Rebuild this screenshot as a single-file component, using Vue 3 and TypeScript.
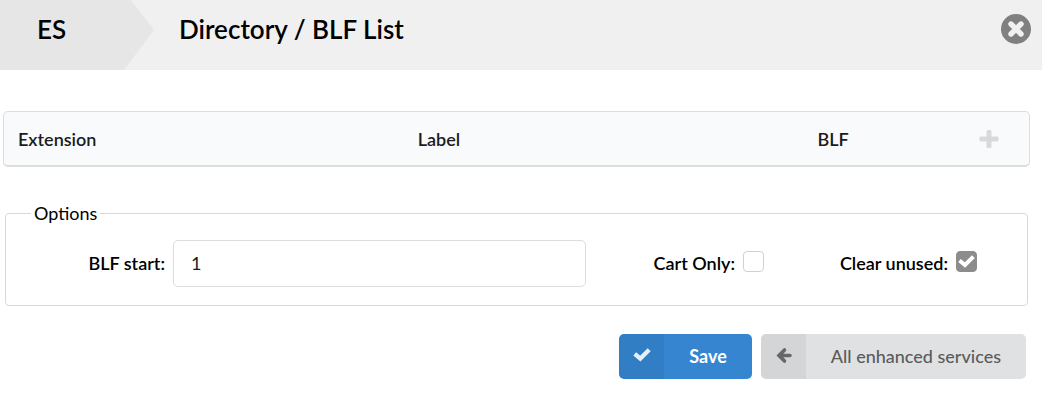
<script setup lang="ts">
import { ref } from 'vue'

interface BlfEntry {
  extension: string
  label: string
  blf: number
}

const entries = ref<BlfEntry[]>([])
const blfStart = ref('1')
const cartOnly = ref(false)
const clearUnused = ref(true)

function addEntry(): void {
  entries.value.push({
    extension: '',
    label: '',
    blf: Number(blfStart.value) + entries.value.length,
  })
}
</script>

<template>
  <header class="bar">
    <a class="crumb" href="#">ES</a>
    <h1 class="title">Directory / BLF List</h1>
    <button class="close" type="button" aria-label="Close">
      <svg viewBox="0 0 30 30" width="30" height="30" aria-hidden="true">
        <circle cx="15" cy="15" r="15" fill="#808080" />
        <path d="M10 10 20 20M20 10 10 20" stroke="#f0f0f0" stroke-width="5.4" stroke-linecap="round" />
      </svg>
    </button>
  </header>

  <main class="content">
    <table class="list">
      <colgroup>
        <col class="wide" />
        <col class="wide" />
        <col />
        <col class="action" />
      </colgroup>
      <thead>
        <tr>
          <th scope="col">Extension</th>
          <th scope="col">Label</th>
          <th scope="col">BLF</th>
          <td>
            <button class="add" type="button" aria-label="Add entry" @click="addEntry">
              <svg viewBox="0 0 20 20" width="20" height="20" aria-hidden="true">
                <path d="M9 1h2q1.500 0 1.500 1.500V7.500H18Q19.500 7.500 19.500 9v2q0 1.500-1.500 1.500H12.500V17.500Q12.500 19 11 19H9Q7.500 19 7.500 17.500V12.500H2Q.5 12.500 .5 11V9Q.5 7.500 2 7.500H7.500V2.500Q7.500 1 9 1Z" fill="#d9d9d9" />
              </svg>
            </button>
          </td>
        </tr>
      </thead>
      <tbody>
        <tr v-for="(entry, index) in entries" :key="index">
          <td>{{ entry.extension }}</td>
          <td>{{ entry.label }}</td>
          <td>{{ entry.blf }}</td>
          <td></td>
        </tr>
      </tbody>
    </table>

    <form @submit.prevent>
      <fieldset class="options">
        <legend>Options</legend>
        <div class="fields">
          <label class="caption" for="blf-start">BLF start:</label>
          <input id="blf-start" v-model="blfStart" class="text" type="text" />
          <div class="check">
            <label for="cart-only">Cart Only:</label>
            <input id="cart-only" v-model="cartOnly" type="checkbox" />
          </div>
          <div class="check">
            <label for="clear-unused">Clear unused:</label>
            <input id="clear-unused" v-model="clearUnused" type="checkbox" />
          </div>
        </div>
      </fieldset>

      <div class="actions">
        <button class="btn primary" type="submit">
          <span class="icon">
            <svg viewBox="0 0 20 20" width="20" height="20" aria-hidden="true">
              <path d="M4.300 9.200 8.300 12.600 15.700 5.200" fill="none" stroke="currentColor" stroke-width="4.200" stroke-linecap="square" stroke-linejoin="miter" />
            </svg>
          </span>
          <span class="text-part">Save</span>
        </button>
        <button class="btn" type="button">
          <span class="icon">
            <svg viewBox="0 0 20 20" width="20" height="20" aria-hidden="true">
              <path d="M10.500 4 5 9.500 10.500 15M6 9.500H16" fill="none" stroke="currentColor" stroke-width="3.600" stroke-linecap="round" stroke-linejoin="miter" />
            </svg>
          </span>
          <span class="text-part">All enhanced services</span>
        </button>
      </div>
    </form>
  </main>
</template>

<style>
body {
  background: #fff;
  font-family: Lato, "Open Sans", sans-serif;
  font-size: 18px;
  line-height: 22px;
  color: #000;
}

button,
input {
  font: inherit;
}
</style>

<style scoped>
.bar {
  display: flex;
  align-items: flex-start;
  height: 70px;
  background: #f0f0f0;
}

.crumb {
  box-sizing: border-box;
  width: 154px;
  height: 70px;
  padding: 14px 37px;
  background: #e6e6e6;
  clip-path: polygon(0 0, 131px 0, 154px 30px, 124px 70px, 0 70px);
  color: #000;
  font-size: 26px;
  font-weight: 600;
  line-height: 30px;
  text-decoration: none;
}

.title {
  flex: 1;
  margin: 0;
  padding: 14px 25px;
  font-size: 26px;
  font-weight: 600;
  line-height: 30px;
}

.close {
  margin: 14px 11px 0 0;
  padding: 0;
  border: 0;
  background: none;
  cursor: pointer;
}

.close svg,
.add svg,
.icon svg {
  display: block;
}

.content {
  padding: 41px 12px 20px 3px;
}

.list {
  width: 100%;
  table-layout: fixed;
  border: 1px solid #dcdddd;
  border-bottom-width: 2px;
  border-radius: 5px;
  border-spacing: 0;
  background: #f9fafb;
  color: #1b1c1d;
}

.wide {
  width: 39%;
}

.action {
  width: 80px;
}

.list th,
.list td {
  height: 53px;
  padding: 0 14px;
  font-weight: 600;
  text-align: left;
}

.list td:last-child {
  padding: 0;
}

.add {
  display: block;
  margin: 0 auto;
  padding: 0;
  border: 0;
  background: none;
  cursor: pointer;
}

.options {
  margin: 35px 2px 0;
  padding: 16px 0 18px;
  border: 1px solid #d8d8d8;
  border-radius: 4px;
}

.options legend {
  margin-left: 25px;
  padding: 0 3px;
}

.fields {
  display: grid;
  grid-template-columns: 159px 421fr 178fr 213fr 50fr;
  align-items: center;
}

.caption,
.check {
  padding-bottom: 2px;
  font-weight: 600;
  line-height: 24px;
}

.caption {
  text-align: right;
}

.text {
  box-sizing: border-box;
  min-width: 0;
  height: 47px;
  margin-left: 8px;
  padding: 0 17px 2px;
  border: 1px solid #dcdddd;
  border-radius: 5px;
  background: #fff;
  color: #1b1c1d;
}

.check {
  display: flex;
  align-items: flex-start;
  justify-content: flex-end;
  gap: 8px;
}

.check input {
  appearance: none;
  box-sizing: border-box;
  width: 21px;
  height: 21px;
  margin: 0;
  border: 1px solid #d0d0d0;
  border-radius: 4px;
  background: #fff;
}

.check input:checked {
  border-color: #8c8c8c;
  background: #8c8c8c url("data:image/svg+xml,%3Csvg xmlns='http://www.w3.org/2000/svg' viewBox='0 0 19 19'%3E%3Cpath d='M4 9.700 8 13 15 6' fill='none' stroke='white' stroke-width='4' stroke-linecap='square'/%3E%3C/svg%3E") center / 19px 19px no-repeat;
}

.actions {
  display: flex;
  justify-content: flex-end;
  gap: 9px;
  margin: 28px 4px 0 0;
}

.btn {
  display: flex;
  height: 45px;
  padding: 0;
  border: 0;
  border-radius: 5px;
  overflow: hidden;
  background: #e0e1e2;
  color: #5a5b5c;
  font-weight: 500;
  line-height: 45px;
  cursor: pointer;
}

.primary {
  background: #3585d0;
  color: #fff;
  font-weight: 700;
}

.icon {
  box-sizing: border-box;
  width: 45px;
  height: 45px;
  padding: 12px 13px;
  background: rgba(0, 0, 0, 0.05);
  color: #666766;
}

.primary .icon {
  color: #e6f0fa;
}

.text-part {
  padding: 0 25px;
}
</style>
